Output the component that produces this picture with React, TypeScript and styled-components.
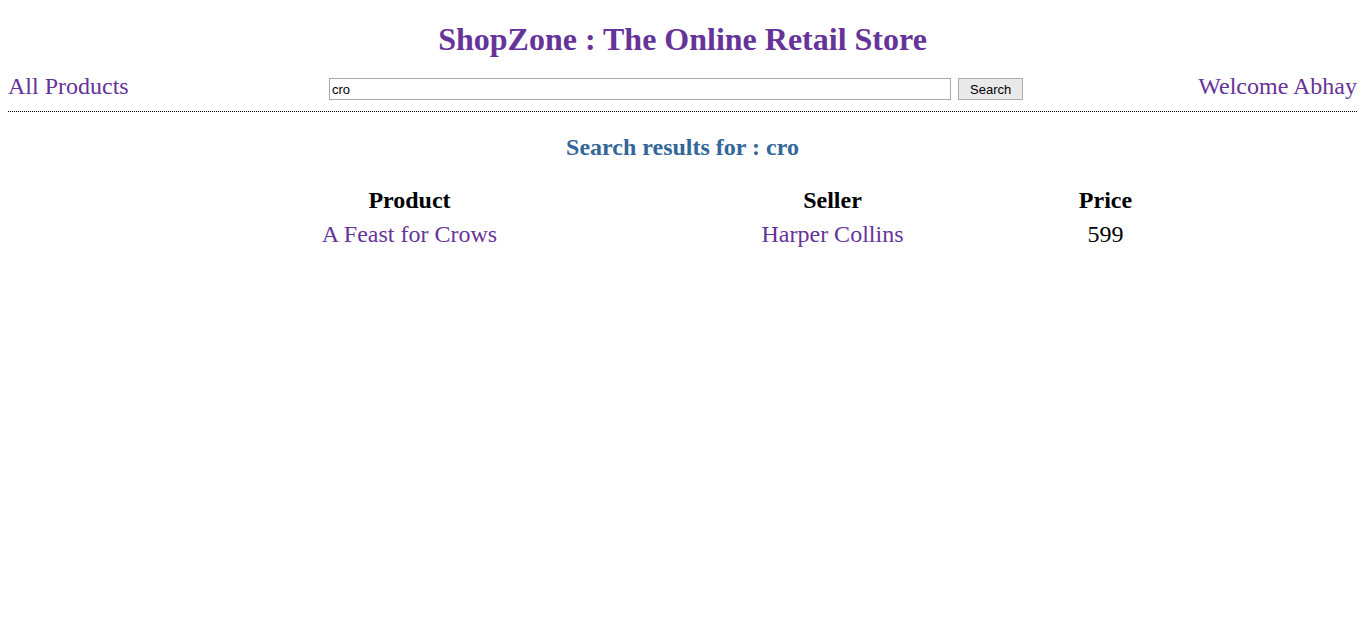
import React from "react";
import styled, { createGlobalStyle } from "styled-components";

const Global = createGlobalStyle`
  body {
    margin: 8px;
    font-family: "Liberation Serif", "Times New Roman", serif;
    background: #fff;
    color: #000;
  }
`;

const Title = styled.h1`
  margin: 13px 0 0;
  text-align: center;
  font-size: 32px;
  line-height: 37px;
  font-weight: bold;
  color: #663399;
`;

const Nav = styled.div`
  display: grid;
  grid-template-columns: 321px 1fr auto;
  align-items: end;
  margin-top: 14px;
  padding-bottom: 11px;
  border-bottom: 1px dotted #000;
`;

const NavLink = styled.a`
  font-size: 24px;
  color: #663399;
  text-decoration: none;
  line-height: 28px;
`;

const SearchForm = styled.form`
  display: flex;
  align-items: center;
  gap: 7px;
  margin: 0;
`;

const Input = styled.input`
  width: 616px;
  height: 18px;
  padding: 1px 2px;
  border: 1px solid #a9a9a9;
  font-family: "Liberation Sans", Arial, sans-serif;
  font-size: 13px;
  color: #000;
  outline: none;
`;

const Button = styled.button`
  height: 22px;
  padding: 0 11px;
  border: 1px solid #adadad;
  background: #e9e9e9;
  border-radius: 0;
  font-family: "Liberation Sans", Arial, sans-serif;
  font-size: 13px;
  color: #000;
`;

const Heading = styled.h2`
  margin: 21px 0 0;
  text-align: center;
  font-size: 24px;
  line-height: 28px;
  font-weight: bold;
  color: #336699;
`;

const Table = styled.div`
  display: grid;
  grid-template-columns: 398px 448px 98px;
  justify-content: center;
  margin-top: 25px;
  row-gap: 6px;
  font-size: 24px;
  line-height: 28px;
`;

const HeadCell = styled.div`
  text-align: center;
  font-weight: bold;
`;

const Cell = styled.div<{ $link?: boolean }>`
  text-align: center;
  color: ${(p) => (p.$link ? "#663399" : "#000")};
`;

export default function App() {
  return (
    <>
      <Global />
      <Title>ShopZone : The Online Retail Store</Title>
      <Nav>
        <NavLink href="#">All Products</NavLink>
        <SearchForm onSubmit={(e) => e.preventDefault()}>
          <Input defaultValue="cro" />
          <Button type="submit">Search</Button>
        </SearchForm>
        <NavLink href="#">Welcome Abhay</NavLink>
      </Nav>
      <Heading>Search results for : cro</Heading>
      <Table>
        <HeadCell>Product</HeadCell>
        <HeadCell>Seller</HeadCell>
        <HeadCell>Price</HeadCell>
        <Cell $link>A Feast for Crows</Cell>
        <Cell $link>Harper Collins</Cell>
        <Cell>599</Cell>
      </Table>
    </>
  );
}
